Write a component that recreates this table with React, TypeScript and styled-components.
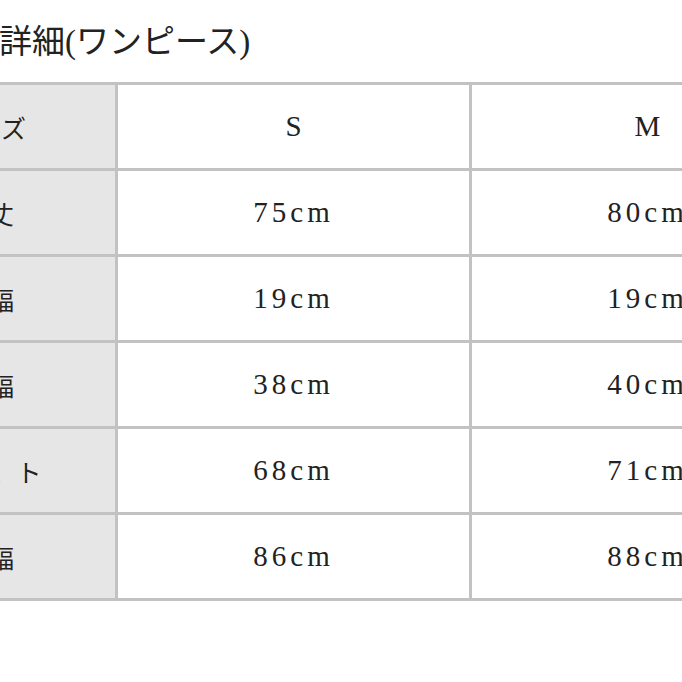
import styled, { createGlobalStyle } from 'styled-components';

const GlobalStyle = createGlobalStyle`
  html, body {
    margin: 0;
    padding: 0;
    background: #ffffff;
    overflow: hidden;
  }
  body {
    font-family: "Liberation Serif", "Noto Sans CJK JP", serif;
    color: #222222;
  }
`;

const S = {
  Page: styled.div`
    width: 682px;
    height: 682px;
    overflow: hidden;
  `,

  Section: styled.section`
    margin-left: -140px;
    width: 966px;
  `,

  Title: styled.h2`
    margin: 21px 0 18px 41px;
    font-size: 33px;
    line-height: 43px;
    font-weight: 400;
    color: #222222;
  `,

  SizeTable: styled.table`
    border-collapse: collapse;
    table-layout: fixed;
    width: 966px;
    border: 3px solid #c2c2c2;
  `,

  LabelCell: styled.th<{ $spaced?: boolean }>`
    width: 252px;
    height: 83px;
    padding: 0;
    background: #e6e6e6;
    border: 3px solid #c2c2c2;
    font-size: 25px;
    font-weight: 400;
    text-align: center;
    vertical-align: middle;
    text-indent: ${({ $spaced }) => ($spaced ? '16px' : '0')};
    letter-spacing: ${({ $spaced }) => ($spaced ? '14px' : '0')};
  `,

  ValueCell: styled.td<{ $head?: boolean }>`
    width: 351px;
    height: 83px;
    padding: 0;
    border: 3px solid #c2c2c2;
    font-size: 29px;
    text-align: center;
    vertical-align: middle;
    letter-spacing: ${({ $head }) => ($head ? '0' : '4px')};
  `,
};

const rows = [
  { label: '着丈', s: '75cm', m: '80cm' },
  { label: '肩幅', s: '19cm', m: '19cm' },
  { label: '袖幅', s: '38cm', m: '40cm' },
  { label: 'バスト', s: '68cm', m: '71cm', spaced: true },
  { label: '裾幅', s: '86cm', m: '88cm' },
];

function App() {
  return (
    <S.Page>
      <GlobalStyle />
      <S.Section>
        <S.Title>サイズ詳細(ワンピース)</S.Title>
        <S.SizeTable>
          <tbody>
            <tr>
              <S.LabelCell>サイズ</S.LabelCell>
              <S.ValueCell $head>S</S.ValueCell>
              <S.ValueCell $head>M</S.ValueCell>
            </tr>
            {rows.map((row) => (
              <tr key={row.label}>
                <S.LabelCell $spaced={row.spaced}>{row.label}</S.LabelCell>
                <S.ValueCell>{row.s}</S.ValueCell>
                <S.ValueCell>{row.m}</S.ValueCell>
              </tr>
            ))}
          </tbody>
        </S.SizeTable>
      </S.Section>
    </S.Page>
  );
}

export default App;
